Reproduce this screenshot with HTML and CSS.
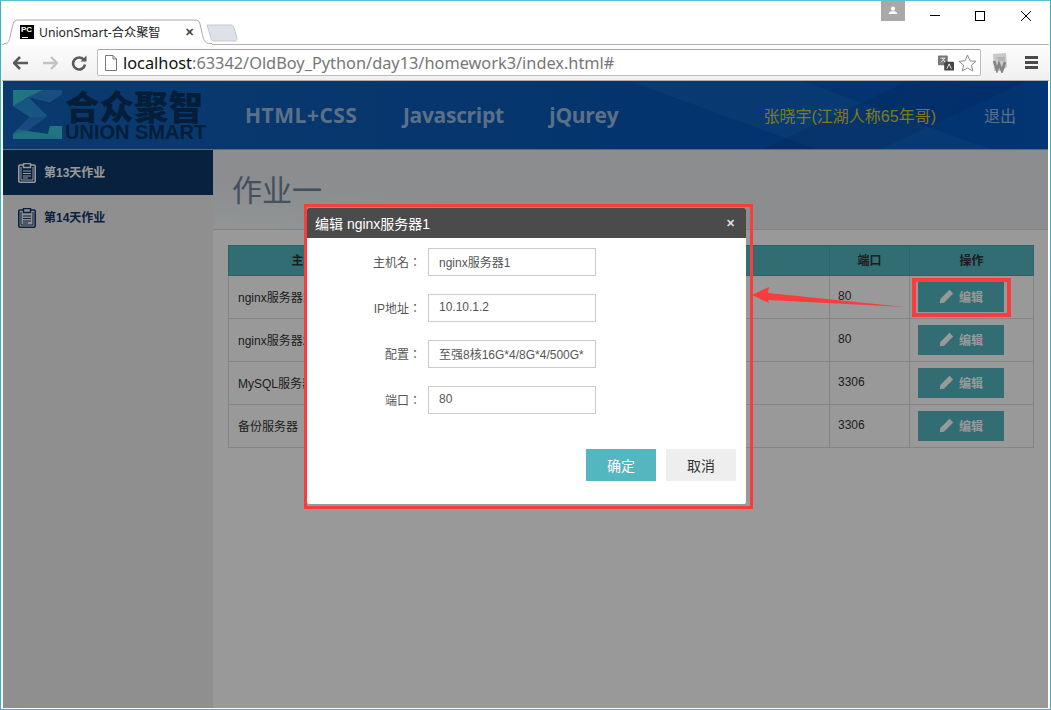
FILE: index.html
```html
<!DOCTYPE html>
<html lang="zh-CN">
<head>
<meta charset="utf-8">
<title>UnionSmart-合众聚智</title>
<link rel="stylesheet" href="styles.css">
</head>
<body>
<div class="window">
  <div class="chrome">
    <div class="titlebar">
      <div class="tab">
        <svg class="tab-shape" width="208" height="26" viewBox="0 0 208 26"><path d="M0 24.5 H1 C4 24.5 5 22 6 18 L9 5 C10 2 11 1 14 1 H191 C194 1 195 2 196 5 L199 18 C200 22 202 24.5 206 24.5 H208 V26 H0Z" fill="#fff"/><path d="M0 24.5 H1 C4 24.5 5 22 6 18 L9 5 C10 2 11 1 14 1 H191 C194 1 195 2 196 5 L199 18 C200 22 202 24.5 206 24.5 H208" fill="none" stroke="#a9a9a9"/></svg>
        <span class="favicon"><span class="favicon-text">PC</span></span>
        <span class="tab-title">UnionSmart-合众聚智</span>
        <span class="tab-close">✕</span>
      </div>
      <svg class="newtab" width="32" height="18" viewBox="0 0 32 18"><path d="M1 1 H25 C27 1 27 2 28 4 L31 14 C31 16 30 17 29 17 H8 C6 17 5 16 5 14Z" fill="#dde2ea" stroke="#c4c8cf"/></svg>
      <div class="spacer"></div>
      <div class="profile"><svg width="10" height="9" viewBox="0 0 14 12"><circle cx="7" cy="3.4" r="2.9" fill="#fff"/><path d="M1 11 C1 8 4 7.2 7 7.2 S13 8 13 11Z" fill="#fff"/></svg></div>
      <div class="winctl">
        <svg width="12" height="12" viewBox="0 0 12 12"><path d="M1 5.5 H11" stroke="#000"/></svg>
        <svg width="12" height="12" viewBox="0 0 12 12"><rect x="1.5" y="1.5" width="9" height="9" fill="none" stroke="#000"/></svg>
        <svg class="winctl-close" width="12" height="12" viewBox="0 0 12 12"><path d="M1 1 L11 11 M11 1 L1 11" stroke="#000"/></svg>
      </div>
    </div>
    <div class="toolbar">
      <svg class="navicon" width="16" height="14" viewBox="0 0 16 14"><path d="M1 7 H15 M7 1 L1 7 L7 13" fill="none" stroke="#5a5a5a" stroke-width="2.6"/></svg>
      <svg class="navicon" width="16" height="14" viewBox="0 0 16 14"><path d="M15 7 H1 M9 1 L15 7 L9 13" fill="none" stroke="#c3c3c3" stroke-width="2.4"/></svg>
      <svg class="navicon" width="16" height="16" viewBox="0 0 16 16"><path d="M13 5 A6 6 0 1 0 14 9.500" fill="none" stroke="#5a5a5a" stroke-width="2.600"/><path d="M9.500 6.500 H15.500 V0.500Z" fill="#5a5a5a"/></svg>
      <div class="omnibox">
        <svg width="12" height="16" viewBox="0 0 12 16"><path d="M0.500 0.500 H8 L11.500 4 V15.500 H0.500Z M8 0.500 V4 H11.500" fill="#fff" stroke="#777"/></svg>
        <span class="url"><span class="url-host">localhost</span>:63342/OldBoy_Python/day13/homework3/index.html#</span>
        <svg class="translate" width="16" height="16" viewBox="0 0 18 17"><rect x="0" y="0" width="11" height="11" rx="1" fill="#777"/><rect x="7" y="7" width="11" height="10" rx="1" fill="#444"/><path d="M2.500 3 H8 M5 3 L8 8 M8 3 L3 8" stroke="#eee" fill="none"/><path d="M10 15 L12.500 9.500 L15 15" stroke="#fff" fill="none"/></svg>
        <svg width="19" height="18" viewBox="0 0 19 18"><path d="M9.500 1 L12 6.800 L18 7.300 L13.400 11.300 L14.800 17 L9.500 14 L4.200 17 L5.600 11.300 L1 7.300 L7 6.800Z" fill="#fff" stroke="#8a8a8a"/></svg>
      </div>
      <svg class="extension" width="17" height="20" viewBox="0 0 17 20"><path d="M2 1 L15 0 L16 14 L11 18 L3 18Z" fill="#c9c9c9"/><path d="M3 8 L6 17 L8 11 L11 18 L14 9" fill="none" stroke="#858585" stroke-width="2.600"/><path d="M5 4 H14 V8 H8Z" fill="#b4b4b4"/></svg>
      <div class="menu"><span class="menu-bar"></span><span class="menu-bar"></span><span class="menu-bar"></span></div>
    </div>
  </div>

  <div class="page">
    <header class="site-header">
      <div class="logo">
        <svg width="50" height="50" viewBox="0 0 50 50">
          <path d="M0 0 H49 V4 L37 12 L15 7 L34 26 L14 41 L35 44 L37 36 H49 V49 H0 V44 L17 27 L0 16Z" fill="#2ea9cf"/>
          <path d="M0 0 H30 L15 7 L0 16Z" fill="#36c4d8"/>
          <path d="M15 7 L37 12 L49 4 V0 H30Z" fill="#2c83d8"/>
          <path d="M17 27 L34 26 L14 41 L5 39Z" fill="#2a7bd6"/>
          <path d="M0 44 L14 41 L35 44 L49 49 H0Z" fill="#33bcd6"/>
          <path d="M15 7 L34 26 L17 27 L0 16Z" fill="#2a8ed8"/>
          <path d="M37 36 H49 V49 L35 44Z" fill="#36c4d8"/>
        </svg>
        <div class="logo-text">
          <div class="logo-cn">合众聚智</div>
          <div class="logo-en">UNION SMART</div>
        </div>
      </div>
      <nav class="nav">
        <a class="nav-link nav-link-wide">HTML+CSS</a>
        <a class="nav-link">Javascript</a>
        <a class="nav-link">jQurey</a>
      </nav>
      <div class="user">
        <span class="user-name">张晓宇(江湖人称65年哥)</span>
        <span class="user-sep"></span>
        <span class="logout">退出</span>
      </div>
    </header>
    <div class="page-body">
      <aside class="sidebar">
        <div class="side-item active">
          <svg width="18" height="20" viewBox="0 0 18 20"><path d="M5 2 H2 Q0.800 2 0.800 3.200 V18 Q0.800 19.200 2 19.200 H16 Q17.200 19.200 17.200 18 V3.200 Q17.200 2 16 2 H13" fill="none" stroke="currentColor" stroke-width="1.600"/><path d="M5.500 0.500 H12.500 V4.500 H5.500Z" fill="none" stroke="currentColor" stroke-width="1.400"/><path d="M3 4 V17 H15 V4" fill="none" stroke="currentColor"/><path d="M5 8 H13 M5 10.500 H13 M5 13 H13 M5 15 H10" stroke="currentColor" stroke-width="1.200"/></svg>
          <span class="side-label">第13天作业</span>
        </div>
        <div class="side-item">
          <svg width="18" height="20" viewBox="0 0 18 20"><path d="M5 2 H2 Q0.800 2 0.800 3.200 V18 Q0.800 19.200 2 19.200 H16 Q17.200 19.200 17.200 18 V3.200 Q17.200 2 16 2 H13" fill="none" stroke="currentColor" stroke-width="1.600"/><path d="M5.500 0.500 H12.500 V4.500 H5.500Z" fill="none" stroke="currentColor" stroke-width="1.400"/><path d="M3 4 V17 H15 V4" fill="none" stroke="currentColor"/><path d="M5 8 H13 M5 10.500 H13 M5 13 H13 M5 15 H10" stroke="currentColor" stroke-width="1.200"/></svg>
          <span class="side-label">第14天作业</span>
        </div>
      </aside>
      <main class="main">
        <div class="main-head"><h1 class="main-title">作业一</h1></div>
        <table class="hosts">
          <colgroup><col class="c-host"><col class="c-ip"><col class="c-conf"><col class="c-port"><col class="c-op"></colgroup>
          <thead><tr><th>主机名</th><th>IP</th><th>配置</th><th>端口</th><th>操作</th></tr></thead>
          <tbody>
            <tr><td>nginx服务器1</td><td>10.10.1.2</td><td>至强8核16G*4/8G*4/500G*</td><td class="port">80</td><td class="op"><a class="edit-btn"><svg width="15" height="15" viewBox="0 0 15 15"><path d="M10.500 0.800 L14.200 4.500 L5 13.700 L0.800 14.200 L1.300 10Z" fill="currentColor"/></svg>编辑</a></td></tr>
            <tr><td>nginx服务器2</td><td>10.10.1.3</td><td>至强8核16G*4/8G*4/500G*</td><td class="port">80</td><td class="op"><a class="edit-btn"><svg width="15" height="15" viewBox="0 0 15 15"><path d="M10.500 0.800 L14.200 4.500 L5 13.700 L0.800 14.200 L1.300 10Z" fill="currentColor"/></svg>编辑</a></td></tr>
            <tr><td>MySQL服务器</td><td>10.10.1.4</td><td>至强8核16G*4/8G*4/500G*</td><td class="port">3306</td><td class="op"><a class="edit-btn"><svg width="15" height="15" viewBox="0 0 15 15"><path d="M10.500 0.800 L14.200 4.500 L5 13.700 L0.800 14.200 L1.300 10Z" fill="currentColor"/></svg>编辑</a></td></tr>
            <tr><td>备份服务器</td><td>10.10.1.5</td><td>至强8核16G*4/8G*4/500G*</td><td class="port">3306</td><td class="op"><a class="edit-btn"><svg width="15" height="15" viewBox="0 0 15 15"><path d="M10.500 0.800 L14.200 4.500 L5 13.700 L0.800 14.200 L1.300 10Z" fill="currentColor"/></svg>编辑</a></td></tr>
          </tbody>
        </table>
      </main>
    </div>
    <div class="overlay"></div>
    <section class="modal">
      <div class="modal-head"><span>编辑 nginx服务器1</span><span class="modal-close">✕</span></div>
      <form class="modal-form">
        <label class="field"><span class="field-label" lang="zh-TW">主机名：</span><input class="field-input" value="nginx服务器1" readonly></label>
        <label class="field"><span class="field-label" lang="zh-TW">IP地址：</span><input class="field-input" value="10.10.1.2" readonly></label>
        <label class="field"><span class="field-label" lang="zh-TW">配置：</span><input class="field-input" value="至强8核16G*4/8G*4/500G*" readonly></label>
        <label class="field"><span class="field-label" lang="zh-TW">端口：</span><input class="field-input" value="80" readonly></label>
      </form>
      <div class="modal-foot">
        <a class="btn btn-ok">确定</a>
        <a class="btn btn-cancel">取消</a>
      </div>
    </section>
    <div class="mark mark-modal"></div>
    <div class="mark mark-button"></div>
    <svg class="mark-arrow" width="160" height="24" viewBox="0 0 160 24"><polygon points="0,8 17,0 16,6 153,20 16,13 17,16" fill="#f93c3c"/></svg>
  </div>
</div>
</body>
</html>
```
FILE: styles.css
```css
* { box-sizing: border-box; }
html, body { margin: 0; padding: 0; }
body {
  width: 1051px;
  height: 710px;
  overflow: hidden;
  font-family: "Liberation Sans", "Noto Sans CJK SC", sans-serif;
  font-size: 12px;
  color: #333;
  background: #fff;
}
.window {
  width: 1051px;
  height: 710px;
  display: flex;
  flex-direction: column;
  border: 1px solid #3fb0c4;
  border-top-color: #5cc0d0;
  background: #fff;
  padding: 0 2px 1px 2px;
  position: relative;
}

/* browser chrome */
.chrome { flex: none; height: 80px; display: flex; flex-direction: column; margin: 0 -1px; }
.titlebar { height: 44px; flex: none; display: flex; align-items: flex-end; border-bottom: 1px solid #b3b3b3; position: relative; }
.tab {
  width: 208px; height: 26px; margin-left: 2px; margin-bottom: -1px;
  position: relative; display: flex; align-items: center;
  padding-left: 16px; flex: none;
}
.tab-shape { position: absolute; left: 0; top: 0; }
.favicon { position: relative; width: 14px; height: 14px; background: #000; display: block; flex: none; }
.favicon-text { position: absolute; left: 1px; top: 0; font: bold 8px/9px "Liberation Sans", sans-serif; color: #fff; }
.favicon::after { content: ""; position: absolute; left: 2px; bottom: 1px; width: 6px; height: 1px; background: #fff; }
.tab-title { position: relative; margin-left: 5px; font: 12.200px "Noto Sans", "Noto Sans CJK SC", sans-serif; color: #222; white-space: nowrap; width: 146px; }
.tab-close { position: relative; font-size: 11px; font-weight: bold; color: #444; }
.newtab { flex: none; margin: 0 0 2px -6px; align-self: flex-end; }
.spacer { flex: 1; }
.profile { align-self: flex-start; width: 24px; height: 20px; background: #a9a9a9; display: flex; align-items: center; justify-content: center; padding-bottom: 2px; }
.winctl { align-self: flex-start; display: flex; gap: 33px; margin: 9px 17px 0 24px; }
.winctl svg { display: block; width: 12px; height: 12px; }
.winctl .winctl-close { margin-left: 1px; }
.toolbar {
  height: 36px; flex: none; display: flex; align-items: center;
  background: linear-gradient(#fdfdfd, #f0f0f0);
  border-bottom: 1px solid #b0b0b0;
  padding-left: 11px;
}
.navicon { flex: none; margin-right: 13px; }
.omnibox {
  width: 884px; height: 27px; margin-left: -3px; flex: none;
  background: #fff; border: 1px solid #bdbdbd; border-top-color: #a5a5a5; border-radius: 2px;
  display: flex; align-items: center; padding: 0 3px 0 7px; gap: 1px;
}
.url { flex: 1; margin-left: 5px; font: 16.330px "Noto Sans", sans-serif; color: #777; white-space: nowrap; }
.url-host { color: #111; }
.translate { margin-right: 3px; }
.extension { flex: none; margin-left: 10px; }
.menu { margin-left: 17px; display: flex; flex-direction: column; gap: 2px; width: 13px; }
.menu-bar { display: block; height: 3px; background: #4a4a4a; }

/* page */
.page { flex: 1; min-height: 0; position: relative; display: flex; flex-direction: column; background: #fff; overflow: hidden; }
.site-header {
  flex: none; height: 69px; display: flex; align-items: center;
  border-bottom: 1px solid #8fb4d8;
  background:
    linear-gradient(155deg, transparent 76%, rgba(0,20,90,.12) 76%, rgba(0,20,90,.12) 86%, transparent 86%),
    linear-gradient(20deg, transparent 66%, rgba(60,150,220,.14) 66%, rgba(60,150,220,.14) 80%, transparent 80%),
    linear-gradient(90deg, #1261b7, #0858b6 60%, #0557c0);
}
.logo { display: flex; align-items: center; margin-left: 10px; gap: 2px; width: 192px; flex: none; }
.logo svg { display: block; flex: none; }
.logo-cn { font: 900 34.500px/30px "Noto Sans CJK SC", sans-serif; color: #073261; white-space: nowrap; }
.logo-en { font: bold 20px/16px "Liberation Sans", sans-serif; color: #073261; white-space: nowrap; margin-top: 4px; }
.nav { display: flex; gap: 45.500px; margin-left: 40px; }
.nav-link { font: bold 21px "Open Sans", sans-serif; color: #98bbe3; letter-spacing: -.3px; }
.nav-link-wide { letter-spacing: .5px; }
.user { margin-left: auto; display: flex; align-items: center; margin-right: 32px; }
.user-name { font-size: 16px; color: #d3cc2c; }
.user-sep { width: 1px; height: 14px; background: #0f4d92; margin: 0 25px 0 22px; }
.logout { font-size: 16px; color: #98bbe3; }
.page-body { flex: 1; min-height: 0; display: flex; }
.sidebar { width: 210px; flex: none; background: #eee; }
.side-item { height: 45px; display: flex; align-items: center; gap: 8px; padding-left: 15px; color: #0e3769; font-weight: bold; }
.side-label { padding-bottom: 2px; }
.side-item.active { background: #0e3769; color: #fff; }
.side-item svg { flex: none; }
.main { flex: 1; min-width: 0; display: flex; flex-direction: column; align-items: stretch; background: #fff; }
.main-head { height: 80px; flex: none; background: linear-gradient(to bottom left, #e8ecef 70%, #f4f8fb); border-bottom: 1px solid #d8dcdf; padding: 24px 0 0 19px; }
.main-title { margin: 0; font-size: 30px; font-weight: normal; line-height: 34px; color: #72869c; }
.hosts {
  margin: 15px 15px 0; width: 805px; border-collapse: collapse; table-layout: fixed;
}
.c-host { width: 162px; } .c-ip { width: 200px; } .c-conf { width: 239px; } .c-port { width: 80px; } .c-op { width: 124px; }
.hosts th { height: 30px; background: #52b6bf; border: 1px solid #4aa8b0; font-size: 12px; color: #333; padding: 0 0 2px; }
.hosts td { height: 43px; border: 1px solid #ddd; padding: 0 9px 2px; color: #333; }
.hosts td.port { padding-left: 8px; }
.hosts td.op { padding: 0 8px 1px; }
.edit-btn {
  width: 86px; height: 30px; background: #52b6bf; color: #fff; display: flex;
  align-items: center; justify-content: center; gap: 5px; font-size: 12px; font-weight: bold;
}
.overlay { position: absolute; inset: 0; background: rgba(0,0,0,.4); }

/* modal */
.modal { position: absolute; left: 304px; top: 127px; width: 439px; height: 296px; background: #fff; border-radius: 2px; display: flex; flex-direction: column; }
.modal-head { height: 30px; flex: none; background: #4b4b4b; color: #fff; font-size: 14px; display: flex; align-items: center; justify-content: space-between; padding: 0 11px 0 8px; border-radius: 2px 2px 0 0; }
.modal-close { font-size: 11px; font-weight: bold; color: #ddd; }
.modal-form { padding-top: 10px; display: flex; flex-direction: column; gap: 18px; }
.field { display: flex; align-items: center; }
.field-label { width: 114px; margin-right: 7px; padding-bottom: 2px; text-align: right; color: #555; font-family: "Liberation Sans", "Noto Sans CJK TC", sans-serif; }
.field-input { width: 168px; height: 28px; border: 1px solid #ccc; padding: 0 10px 2px; font: 12px "Liberation Sans", "Noto Sans CJK SC", sans-serif; color: #555; background: #fff; outline: none; }
.modal-foot { margin-top: 35px; display: flex; justify-content: flex-end; gap: 10px; padding-right: 10px; }
.btn { width: 70px; height: 32px; display: flex; align-items: center; justify-content: center; font-size: 14px; }
.btn-ok { background: #54b6bf; color: #fff; }
.btn-cancel { background: #eee; color: #333; }

/* annotation marks */
.mark { position: absolute; border: 3px solid #f93c3c; }
.mark-modal { left: 301px; top: 123px; width: 449px; height: 305px; }
.mark-button { left: 909px; top: 197px; width: 99px; height: 39px; border-width: 4px; }
.mark-arrow { position: absolute; left: 749px; top: 206px; }
```
